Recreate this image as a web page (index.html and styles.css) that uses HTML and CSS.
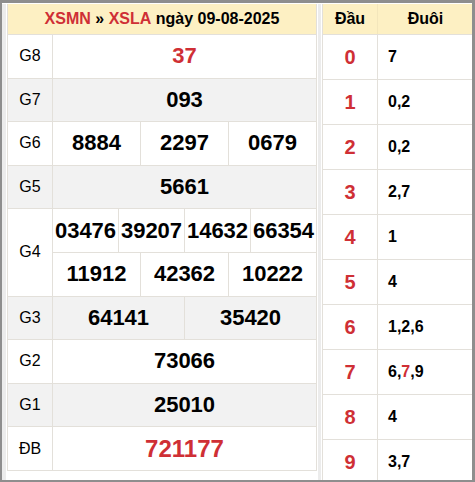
FILE: index.html
```html
<!DOCTYPE html>
<html lang="vi">
<head>
<meta charset="utf-8">
<link rel="stylesheet" href="styles.css">
</head>
<body>
<div class="frame">
  <div class="kq">
    <div class="kq-head"><span class="red">XSMN</span> » <span class="red">XSLA</span> ngày 09-08-2025</div>
    <div class="row">
      <div class="lbl">G8</div>
      <div class="vals"><div class="cell red">37</div></div>
    </div>
    <div class="row alt">
      <div class="lbl">G7</div>
      <div class="vals"><div class="cell">093</div></div>
    </div>
    <div class="row">
      <div class="lbl">G6</div>
      <div class="vals"><div class="cell">8884</div><div class="cell">2297</div><div class="cell">0679</div></div>
    </div>
    <div class="row alt">
      <div class="lbl">G5</div>
      <div class="vals"><div class="cell">5661</div></div>
    </div>
    <div class="row double">
      <div class="lbl">G4</div>
      <div class="stack">
        <div class="vals"><div class="cell">03476</div><div class="cell">39207</div><div class="cell">14632</div><div class="cell">66354</div></div>
        <div class="vals sub"><div class="cell">11912</div><div class="cell">42362</div><div class="cell">10222</div></div>
      </div>
    </div>
    <div class="row alt">
      <div class="lbl">G3</div>
      <div class="vals"><div class="cell">64141</div><div class="cell">35420</div></div>
    </div>
    <div class="row">
      <div class="lbl">G2</div>
      <div class="vals"><div class="cell">73066</div></div>
    </div>
    <div class="row alt">
      <div class="lbl">G1</div>
      <div class="vals"><div class="cell">25010</div></div>
    </div>
    <div class="row">
      <div class="lbl">ĐB</div>
      <div class="vals"><div class="cell red big">721177</div></div>
    </div>
  </div>
  <div class="sep"></div>
  <div class="lt">
    <div class="lt-head"><div class="dau">Đầu</div><div class="duoi">Đuôi</div></div>
    <div class="lt-row"><div class="dau red">0</div><div class="duoi">7</div></div>
    <div class="lt-row"><div class="dau red">1</div><div class="duoi">0,2</div></div>
    <div class="lt-row"><div class="dau red">2</div><div class="duoi">0,2</div></div>
    <div class="lt-row"><div class="dau red">3</div><div class="duoi">2,7</div></div>
    <div class="lt-row"><div class="dau red">4</div><div class="duoi">1</div></div>
    <div class="lt-row"><div class="dau red">5</div><div class="duoi">4</div></div>
    <div class="lt-row"><div class="dau red">6</div><div class="duoi">1,2,6</div></div>
    <div class="lt-row"><div class="dau red">7</div><div class="duoi">6,<span class="red">7</span>,9</div></div>
    <div class="lt-row"><div class="dau red">8</div><div class="duoi">4</div></div>
    <div class="lt-row"><div class="dau red">9</div><div class="duoi">3,7</div></div>
  </div>
</div>
</body>
</html>
```

FILE: styles.css
```css
* { box-sizing: border-box; }
html, body { margin: 0; padding: 0; }
body {
  font-family: "Liberation Sans", Arial, sans-serif;
  color: #000;
  background: #fff;
}
.frame {
  width: 475px;
  height: 482px;
  overflow: hidden;
  border-style: solid;
  border-color: #8e8e8e;
  border-width: 3px 3px 2px 2px;
  background: #fff;
  display: flex;
  align-items: flex-start;
  padding: 1px 0 0 0;
}
.frame::before {
  content: "";
  flex: 0 0 4px;
  align-self: stretch;
  background: #ececec;
  border-right: 1px solid #fff;
}
.red { color: #cf2f35; }

/* results table */
.kq {
  width: 310px;
  flex: 0 0 310px;
  border: 1px solid #e3e0da;
  border-top: 0;
}
.kq-head {
  height: 30px;
  background: #fdf0c3;
  font-weight: bold;
  font-size: 16px;
  display: flex;
  align-items: center;
  justify-content: center;
  white-space: pre;
}
.row {
  display: flex;
  height: 43.6px;
  border-top: 1px solid #e3e0da;
  background: #fff;
}
.row.alt { background: #f2f2f2; }
.row.double { height: 87.2px; }
.lbl {
  width: 45px;
  flex: 0 0 45px;
  border-right: 1px solid #e3e0da;
  display: flex;
  align-items: center;
  justify-content: center;
  font-size: 16px;
}
.stack {
  flex: 1;
  display: flex;
  flex-direction: column;
}
.stack .vals { flex: 1; }
.stack .vals.sub { border-top: 1px solid #e3e0da; }
.vals {
  flex: 1;
  display: flex;
}
.cell {
  flex: 1;
  display: flex;
  align-items: center;
  justify-content: center;
  font-size: 22px;
  font-weight: bold;
  border-left: 1px solid #e3e0da;
}
.cell:first-child { border-left: 0; }
.cell.big { font-size: 24px; }

.sep {
  flex: 0 0 5px;
  align-self: stretch;
  background: #ececec;
  border-left: 1px solid #fff;
  border-right: 1px solid #fff;
}

/* loto table */
.lt {
  flex: 0 0 152px;
  width: 152px;
  border-left: 1px solid #e3e0da;
  border-right: 1px solid #e3e0da;
}
.lt-head {
  height: 30px;
  background: #fdf0c3;
  display: flex;
  font-weight: bold;
  font-size: 16px;
}
.lt-row {
  display: flex;
  height: 45px;
  border-top: 1px solid #e3e0da;
}
.dau {
  width: 55px;
  flex: 0 0 55px;
  border-right: 1px solid #e3e0da;
  display: flex;
  align-items: center;
  justify-content: center;
}
.duoi {
  flex: 1;
  display: flex;
  align-items: center;
}
.lt-head .duoi { justify-content: center; }
.lt-head .dau { border-right-color: #f3e6bb; }
.lt-row .dau { font-size: 20px; font-weight: bold; }
.lt-row .duoi { font-size: 16px; font-weight: bold; padding-left: 10px; white-space: pre; }
```
